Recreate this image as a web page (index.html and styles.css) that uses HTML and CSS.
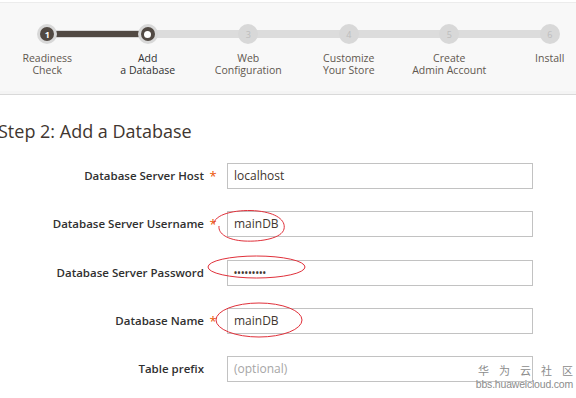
FILE: index.html
```html
<!DOCTYPE html>
<html>
<head>
<meta charset="utf-8">
<link rel="stylesheet" href="styles.css">
</head>
<body>
<div class="page">
  <header class="progress">
    <ol class="steps">
      <li class="step done">
        <span class="dot"><span class="num">1</span></span>
        <span class="label">Readiness<br>Check</span>
      </li>
      <li class="step active">
        <span class="dot"><span class="hole"></span></span>
        <span class="label">Add<br>a Database</span>
      </li>
      <li class="step">
        <span class="dot"><span class="num">3</span></span>
        <span class="label">Web<br>Configuration</span>
      </li>
      <li class="step">
        <span class="dot"><span class="num">4</span></span>
        <span class="label">Customize<br>Your Store</span>
      </li>
      <li class="step">
        <span class="dot"><span class="num">5</span></span>
        <span class="label">Create<br>Admin Account</span>
      </li>
      <li class="step last">
        <span class="dot"><span class="num">6</span></span>
        <span class="label">Install</span>
      </li>
    </ol>
  </header>

  <main class="content">
    <h1 class="title">Step 2: Add a Database</h1>
    <form class="form">
      <label class="lbl">Database Server Host</label>
      <span class="req">*</span>
      <div class="field">localhost</div>

      <label class="lbl">Database Server Username</label>
      <span class="req">*</span>
      <div class="field">mainDB</div>

      <label class="lbl">Database Server Password</label>
      <span class="req"></span>
      <div class="field pwd">•••••••••</div>

      <label class="lbl">Database Name</label>
      <span class="req">*</span>
      <div class="field">mainDB</div>

      <label class="lbl">Table prefix</label>
      <span class="req"></span>
      <div class="field placeholder">(optional)</div>
    </form>
  </main>

  <svg class="marks" width="576" height="398" viewBox="0 0 576 398">
    <path d="M214 223 C216 213 240 209 258 211 C276 213 286 220 284 229 C282 238 262 242 244 241 C228 240 218 234 219 226" />
    <ellipse cx="256.5" cy="267" rx="48.5" ry="11" />
    <ellipse cx="259" cy="320" rx="43" ry="17" />
  </svg>

  <div class="watermark">
    <div class="wm-cn">华为云社区</div>
    <div class="wm-url">bbs.huaweicloud.com</div>
  </div>
</div>
</body>
</html>
```

FILE: styles.css
```css
html, body {
  margin: 0;
  padding: 0;
  background: #ffffff;
}

body {
  width: 576px;
  height: 398px;
  overflow: hidden;
  font-family: "Open Sans", "Noto Sans", sans-serif;
  color: #333333;
}

.page {
  position: relative;
  width: 576px;
  height: 398px;
  overflow: hidden;
}

.progress {
  height: 89px;
  background: #f8f8f8;
  border-top: 2px solid #ffffff;
  box-shadow: inset 0 1px 0 #ececec;
  border-bottom: 1px solid #d9d9d9;
  padding-bottom: 3px;
  background-clip: content-box;
  position: relative;
}

.progress::after {
  content: "";
  position: absolute;
  left: 0;
  right: 0;
  bottom: 0;
  height: 3px;
  background: #f4f4f4;
}

.steps {
  list-style: none;
  margin: 0 0 0 -3px;
  padding: 0;
  display: flex;
  width: 603px;
}

.step {
  position: relative;
  width: 100.5px;
  display: flex;
  flex-direction: column;
  align-items: center;
  padding-top: 22px;
}

.step::before {
  content: "";
  position: absolute;
  left: 50%;
  width: 100%;
  top: 28px;
  height: 8px;
  background: #dcdcdc;
}

.step.last::before {
  display: none;
}

.step.done::before {
  background: #d6d6d6;
}

.step.done::after {
  content: "";
  position: absolute;
  left: 50%;
  width: 100%;
  top: 29px;
  height: 6px;
  background: #514943;
  z-index: 1;
}

.dot {
  position: relative;
  z-index: 2;
  width: 20px;
  height: 20px;
  border-radius: 50%;
  background: #d8d8d8;
  display: flex;
  align-items: center;
  justify-content: center;
}

.num {
  font-size: 9px;
  color: #bdbdbd;
  line-height: 1;
}

.done .dot::before,
.active .dot::before {
  content: "";
  position: absolute;
  left: 3px;
  top: 3px;
  width: 14px;
  height: 14px;
  border-radius: 50%;
  background: #514943;
}

.done .num {
  position: relative;
  color: #ffffff;
  font-weight: 700;
}

.hole {
  position: relative;
  width: 7px;
  height: 7px;
  border-radius: 50%;
  background: #ffffff;
}

.label {
  margin-top: 8px;
  font-size: 10.5px;
  line-height: 12px;
  text-align: center;
  color: #5f574f;
  white-space: nowrap;
}

.active .label {
  color: #303030;
}

.content {
  padding-top: 24px;
}

.title {
  margin: 0 0 0 -2px;
  font-size: 18px;
  font-weight: 400;
  line-height: 24px;
  color: #41362f;
}

.form {
  margin-top: 20px;
  display: grid;
  grid-template-columns: 204px 18px 311px;
  column-gap: 0;
  row-gap: 22.3px;
  align-items: center;
}

.form > .field {
  margin-left: 5px;
}

.lbl {
  text-align: right;
  font-size: 11.5px;
  font-weight: 600;
  color: #303030;
  white-space: nowrap;
  padding-bottom: 1px;
}

.req {
  text-align: center;
  font-size: 13px;
  color: #eb5202;
}

.field {
  box-sizing: border-box;
  height: 26px;
  border: 1px solid #c2c2c2;
  background: #ffffff;
  padding: 0 6px;
  font-size: 12px;
  line-height: 23px;
  color: #41362f;
}

.field.pwd {
  font-size: 8px;
  font-weight: 700;
  letter-spacing: 0.6px;
  line-height: 24px;
}

.field.placeholder {
  color: #a6a6a6;
}

.marks {
  position: absolute;
  left: 0;
  top: 0;
  pointer-events: none;
}

.marks ellipse,
.marks path {
  fill: none;
  stroke: #e0303a;
  stroke-width: 1;
}

.watermark {
  position: absolute;
  right: 3px;
  top: 363px;
  text-align: right;
  color: #8c8c8c;
  white-space: nowrap;
}

.wm-cn {
  font-family: "Noto Sans CJK SC", sans-serif;
  font-size: 11px;
  line-height: 15px;
  letter-spacing: 10px;
  margin-right: -10px;
}

.wm-url {
  font-family: "Liberation Sans", sans-serif;
  font-size: 10.5px;
  line-height: 12px;
  letter-spacing: -0.2px;
}
```
